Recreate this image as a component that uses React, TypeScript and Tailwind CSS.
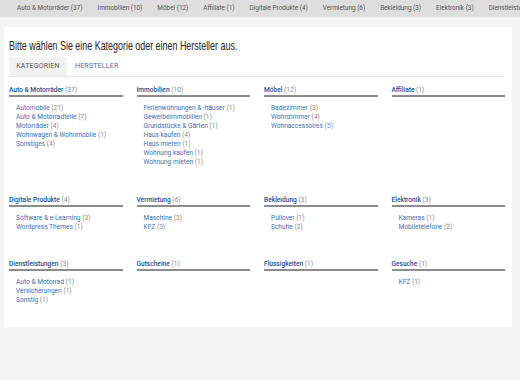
import React from 'react';

interface Category {
    name: string;
    count: number;
    children: { name: string; count: number }[];
}

const navItems = [
    'Auto & Motorräder (37)',
    'Immobilien (10)',
    'Möbel (12)',
    'Affiliate (1)',
    'Digitale Produkte (4)',
    'Vermietung (6)',
    'Bekleidung (3)',
    'Elektronik (3)',
    'Dienstleistungen (3)',
];

const rows: Category[][] = [
    [
        {
            name: 'Auto & Motorräder',
            count: 37,
            children: [
                { name: 'Automobile', count: 21 },
                { name: 'Auto & Motorradteile', count: 7 },
                { name: 'Motorräder', count: 4 },
                { name: 'Wohnwagen & Wohnmobile', count: 1 },
                { name: 'Sonstiges', count: 4 },
            ],
        },
        {
            name: 'Immobilien',
            count: 10,
            children: [
                { name: 'Ferienwohnungen & -häuser', count: 1 },
                { name: 'Gewerbeimmobilien', count: 1 },
                { name: 'Grundstücke & Gärten', count: 1 },
                { name: 'Haus kaufen', count: 4 },
                { name: 'Haus mieten', count: 1 },
                { name: 'Wohnung kaufen', count: 1 },
                { name: 'Wohnung mieten', count: 1 },
            ],
        },
        {
            name: 'Möbel',
            count: 12,
            children: [
                { name: 'Badezimmer', count: 3 },
                { name: 'Wohnzimmer', count: 4 },
                { name: 'Wohnaccessoires', count: 5 },
            ],
        },
        { name: 'Affiliate', count: 1, children: [] },
    ],
    [
        {
            name: 'Digitale Produkte',
            count: 4,
            children: [
                { name: 'Software & e-Learning', count: 3 },
                { name: 'Wordpress Themes', count: 1 },
            ],
        },
        {
            name: 'Vermietung',
            count: 6,
            children: [
                { name: 'Maschine', count: 3 },
                { name: 'KFZ', count: 3 },
            ],
        },
        {
            name: 'Bekleidung',
            count: 3,
            children: [
                { name: 'Pullover', count: 1 },
                { name: 'Schuhe', count: 2 },
            ],
        },
        {
            name: 'Elektronik',
            count: 3,
            children: [
                { name: 'Kameras', count: 1 },
                { name: 'Mobiletelefone', count: 2 },
            ],
        },
    ],
    [
        {
            name: 'Dienstleistungen',
            count: 3,
            children: [
                { name: 'Auto & Motorrad', count: 1 },
                { name: 'Versicherungen', count: 1 },
                { name: 'Sonstig', count: 1 },
            ],
        },
        { name: 'Gutscheine', count: 1, children: [] },
        { name: 'Flüssigkeiten', count: 1, children: [] },
        {
            name: 'Gesuche',
            count: 1,
            children: [{ name: 'KFZ', count: 1 }],
        },
    ],
];

const rowHeights = ['h-[110px]', 'h-[64px]', ''];

function CategoryBlock({ cat }: { cat: Category }) {
    return (
        <div>
            <div className="h-[11px] border-b-2 border-[#8c8c8c] leading-[9px]">
                <span className="text-[#1d4f91] font-medium">{cat.name}</span>{' '}
                <span className="text-[#888]">({cat.count})</span>
            </div>
            <ul className="pl-[7px] pt-[7px]">
                {cat.children.map((c) => (
                    <li key={c.name} className="h-[9px] leading-[9px]">
                        <span className="text-[#3b6fb0]">{c.name}</span>{' '}
                        <span className="text-[#888]">({c.count})</span>
                    </li>
                ))}
            </ul>
        </div>
    );
}

export default function App() {
    return (
        <div className="w-[520px] h-[380px] overflow-hidden bg-[#f4f4f4] font-['Roboto','Open_Sans',sans-serif]">
            {/* top nav */}
            <nav className="h-[17px] bg-[#dedede] flex items-center pl-[17px] gap-[15px] whitespace-nowrap overflow-hidden text-[6.4px] text-[#555]">
                {navItems.map((n) => (
                    <span key={n} className="shrink-0">{n}</span>
                ))}
            </nav>

            <div className="mx-[4px] w-[508px] mt-[10px] bg-white pt-[12px] pb-[22px] px-[5px]">
                {/* condensed heading: no narrow font installed, so squeeze a regular one */}
                <h1 className="w-max origin-left scale-x-[0.66] text-[13.5px] leading-[14px] text-[#222] font-['Liberation_Sans',sans-serif]">
                    Bitte wählen Sie eine Kategorie oder einen Hersteller aus.
                </h1>

                {/* tabs */}
                <div className="mt-[4px] flex border-b border-[#e6e6e6] mr-[3px] text-[7px] tracking-[0.2px]">
                    <div className="w-[58px] h-[19px] bg-[#f2f2f2] flex items-center justify-center text-[#555]">KATEGORIEN</div>
                    <div className="h-[19px] flex items-center px-[8px] text-[#3b6fb0]">HERSTELLER</div>
                </div>

                <div className="pt-[9px] text-[6.6px]">
                    {rows.map((row, i) => (
                        <div key={i} className={`grid grid-cols-4 gap-x-[14px] pr-[2px] ${rowHeights[i]}`}>
                            {row.map((cat) => (
                                <CategoryBlock key={cat.name} cat={cat} />
                            ))}
                        </div>
                    ))}
                </div>
            </div>
        </div>
    );
}
